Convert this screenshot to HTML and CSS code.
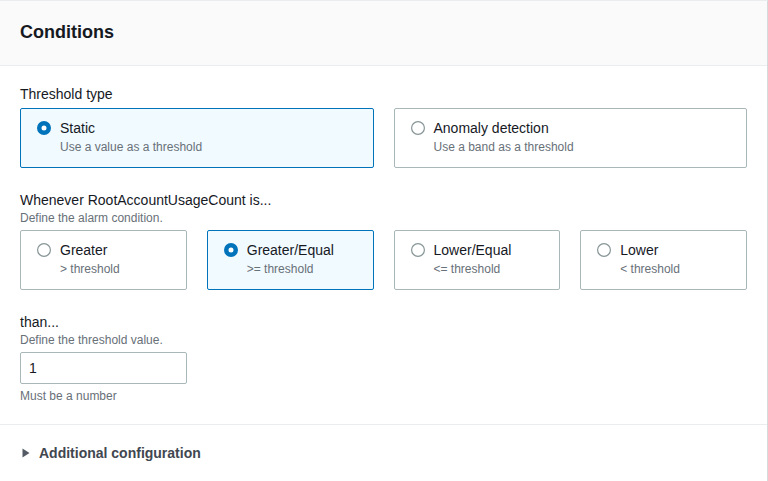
FILE: index.html
```html
<!DOCTYPE html>
<html lang="en">
<head>
<meta charset="utf-8">
<title>Conditions</title>
<link rel="stylesheet" href="styles.css">
</head>
<body>
<div class="panel">
  <div class="panel-header">
    <h2 class="panel-title">Conditions</h2>
  </div>
  <div class="panel-body">
    <div class="field field-first">
      <div class="label">Threshold type</div>
      <div class="tiles tiles-2">
        <label class="tile selected">
          <span class="radio"><svg width="14" height="14" viewBox="0 0 14 14"><circle cx="7" cy="7" r="4.75" fill="#fff" stroke="#0073bb" stroke-width="4.5"/></svg></span>
          <span class="tile-text">
            <span class="tile-title">Static</span>
            <span class="tile-desc">Use a value as a threshold</span>
          </span>
        </label>
        <label class="tile">
          <span class="radio"><svg width="14" height="14" viewBox="0 0 14 14"><circle cx="7" cy="7" r="6.4" fill="#fff" stroke="#879596" stroke-width="1.2"/></svg></span>
          <span class="tile-text">
            <span class="tile-title">Anomaly detection</span>
            <span class="tile-desc">Use a band as a threshold</span>
          </span>
        </label>
      </div>
    </div>

    <div class="field">
      <div class="label">Whenever RootAccountUsageCount is...</div>
      <div class="desc">Define the alarm condition.</div>
      <div class="tiles tiles-4">
        <label class="tile">
          <span class="radio"><svg width="14" height="14" viewBox="0 0 14 14"><circle cx="7" cy="7" r="6.4" fill="#fff" stroke="#879596" stroke-width="1.2"/></svg></span>
          <span class="tile-text">
            <span class="tile-title">Greater</span>
            <span class="tile-desc">&gt; threshold</span>
          </span>
        </label>
        <label class="tile selected">
          <span class="radio"><svg width="14" height="14" viewBox="0 0 14 14"><circle cx="7" cy="7" r="4.75" fill="#fff" stroke="#0073bb" stroke-width="4.5"/></svg></span>
          <span class="tile-text">
            <span class="tile-title">Greater/Equal</span>
            <span class="tile-desc">&gt;= threshold</span>
          </span>
        </label>
        <label class="tile">
          <span class="radio"><svg width="14" height="14" viewBox="0 0 14 14"><circle cx="7" cy="7" r="6.4" fill="#fff" stroke="#879596" stroke-width="1.2"/></svg></span>
          <span class="tile-text">
            <span class="tile-title">Lower/Equal</span>
            <span class="tile-desc">&lt;= threshold</span>
          </span>
        </label>
        <label class="tile">
          <span class="radio"><svg width="14" height="14" viewBox="0 0 14 14"><circle cx="7" cy="7" r="6.4" fill="#fff" stroke="#879596" stroke-width="1.2"/></svg></span>
          <span class="tile-text">
            <span class="tile-title">Lower</span>
            <span class="tile-desc">&lt; threshold</span>
          </span>
        </label>
      </div>
    </div>

    <div class="field">
      <div class="label">than...</div>
      <div class="desc">Define the threshold value.</div>
      <div class="input-wrap">
        <div class="input">1</div>
      </div>
      <div class="hint">Must be a number</div>
    </div>
  </div>
  <div class="expander">
    <svg class="caret" width="8" height="10" viewBox="0 0 8 10"><path d="M0.5 0.5 L7.5 5 L0.5 9.5 Z" fill="#545b64"/></svg>
    <span class="expander-title">Additional configuration</span>
  </div>
</div>
</body>
</html>
```

FILE: styles.css
```css
* {
  box-sizing: border-box;
}

html, body {
  margin: 0;
  padding: 0;
  background: #ffffff;
}

body {
  font-family: "Liberation Sans", Arial, sans-serif;
  color: #16191f;
  font-size: 14px;
  line-height: 22px;
}

.panel {
  width: 768px;
  height: 481px;
  border-top: 1px solid #eaeded;
  border-right: 1px solid #d5dbdb;
  background: #ffffff;
}

.panel-header {
  background: #fafafa;
  border-bottom: 1px solid #eaeded;
  padding: 19px 20px 21px;
}

.panel-title {
  margin: 0;
  font-size: 18px;
  line-height: 24px;
  font-weight: 700;
  color: #16191f;
}

.panel-body {
  padding: 18px 20px 20px;
  border-bottom: 1px solid #eaeded;
}

.field {
  margin-top: 22px;
}

.field-first {
  margin-top: 0;
}

.label {
  font-size: 14px;
  line-height: 20px;
  color: #16191f;
}

.desc {
  font-size: 12px;
  line-height: 16px;
  color: #687078;
}

.tiles {
  display: grid;
  gap: 20px;
  margin-top: 4px;
}

.tiles-2 {
  grid-template-columns: 1fr 1fr;
}

.tiles-4 {
  grid-template-columns: repeat(4, 1fr);
}

.tile {
  display: flex;
  align-items: flex-start;
  gap: 9px;
  height: 60px;
  padding: 8px 12px 12px 16px;
  border: 1px solid #aab7b8;
  border-radius: 2px;
  background: #ffffff;
}

.tile.selected {
  border-color: #0073bb;
  background: #f1faff;
}

.radio {
  display: flex;
  align-items: center;
  height: 22px;
  flex: none;
}

.radio svg {
  display: block;
}

.tile-text {
  display: flex;
  flex-direction: column;
}

.tile-title {
  font-size: 14px;
  line-height: 22px;
  color: #16191f;
}

.tile-desc {
  font-size: 12px;
  line-height: 16px;
  color: #687078;
}

.input-wrap {
  margin-top: 4px;
  width: calc((100% - 60px) / 4);
}

.input {
  height: 32px;
  border: 1px solid #aab7b8;
  border-radius: 2px;
  padding: 0 8px;
  font-size: 14px;
  line-height: 30px;
  color: #16191f;
  background: #ffffff;
}

.hint {
  margin-top: 4px;
  font-size: 12px;
  line-height: 16px;
  color: #687078;
}

.expander {
  display: flex;
  align-items: center;
  gap: 9px;
  padding: 17px 20px 0 22px;
}

.caret {
  display: block;
  flex: none;
}

.expander-title {
  font-size: 14px;
  line-height: 22px;
  font-weight: 700;
  color: #414750;
}
```
